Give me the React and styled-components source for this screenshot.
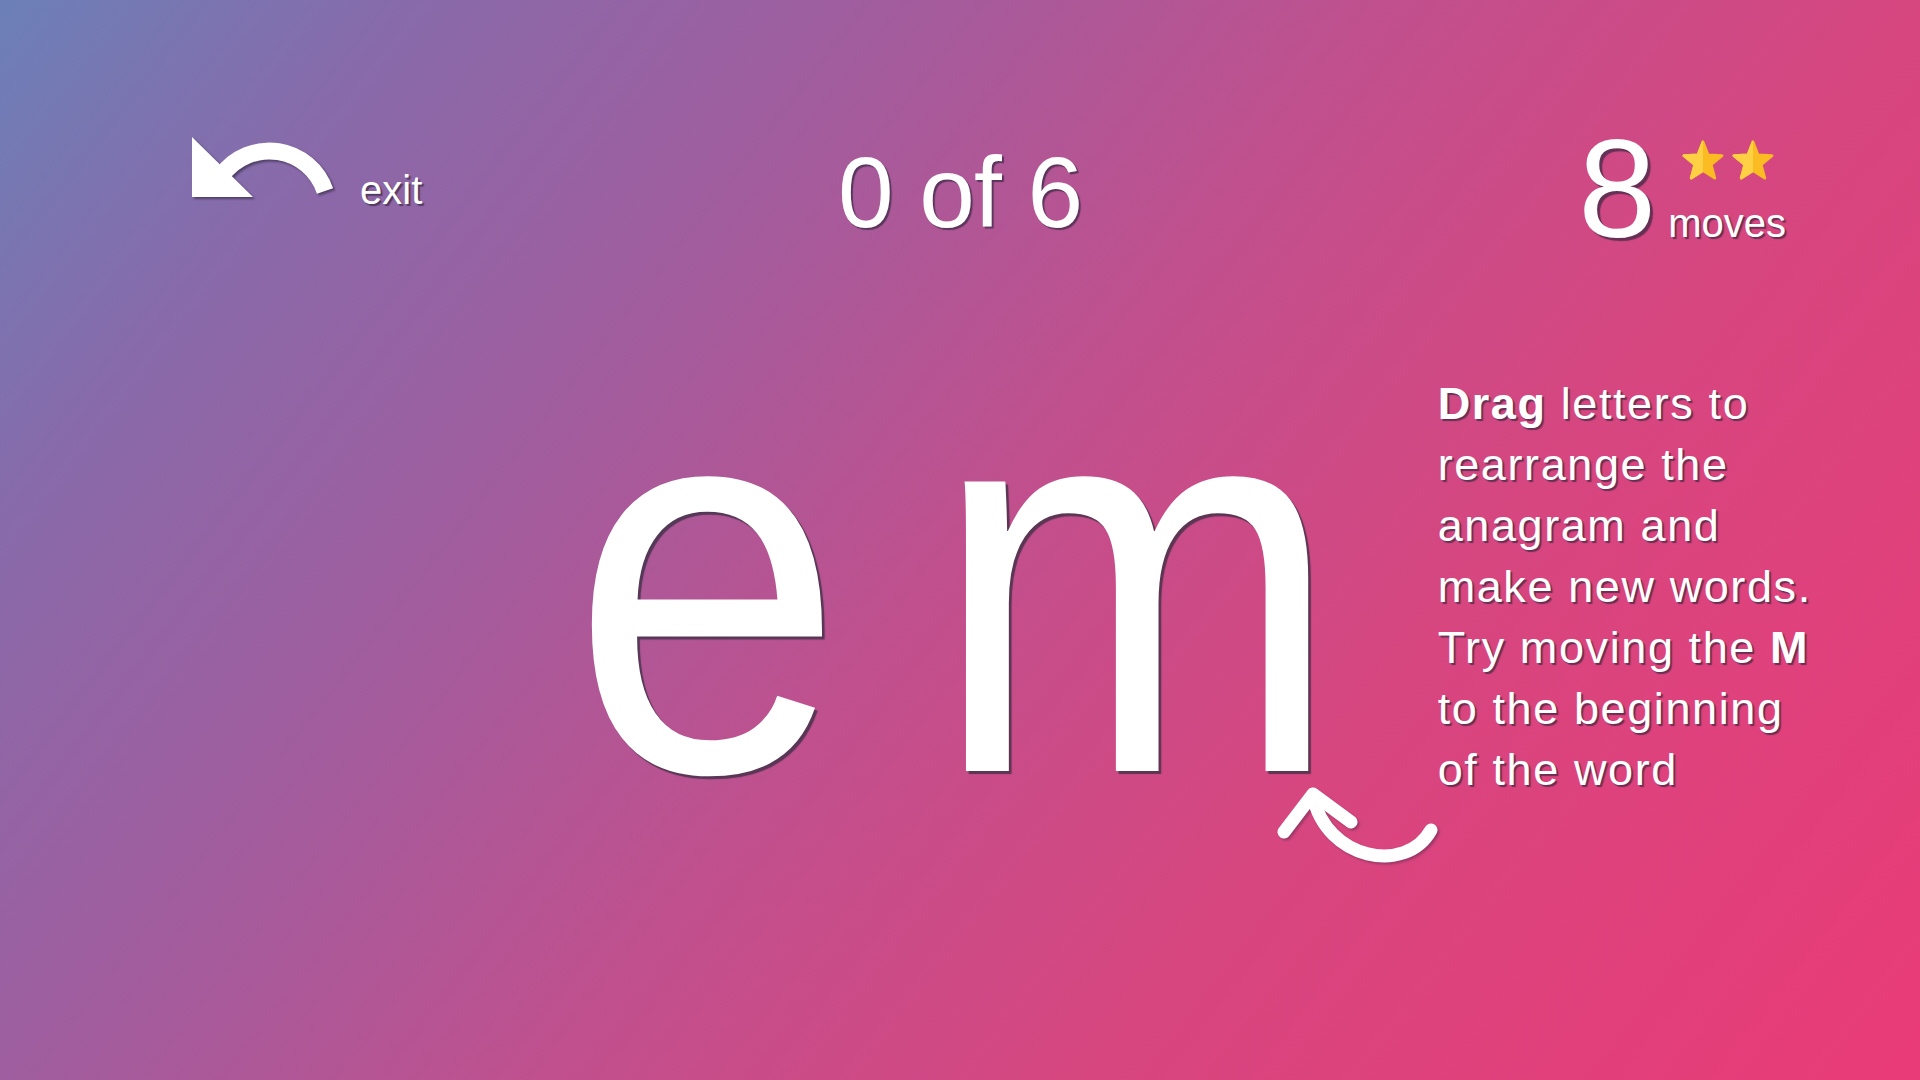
import React from "react"
import styled, { createGlobalStyle } from "styled-components"

const GlobalStyle = createGlobalStyle`
   html, body {
      margin: 0;
      padding: 0;
   }
   body {
      font-family: "Liberation Sans", Arial, sans-serif;
      color: #ffffff;
   }
`

const textShadow = "2px 2px 1px rgba(45, 35, 60, 0.65)"

const ExitArrow = () => (
   <svg width="143" height="65" viewBox="0 0 143 65">
      <polygon points="0,2 0,62 61,62" fill="#fff" />
      <path
         d="M 30 40 A 58.7 58.7 0 0 1 133 56"
         fill="none"
         stroke="#fff"
         strokeWidth="17"
      />
   </svg>
)

const Star = () => (
   <svg width="42" height="40" viewBox="-1 -1 44 42">
      <defs>
         <clipPath id="leftHalf">
            <rect x="-2" y="-2" width="23" height="46" />
         </clipPath>
      </defs>
      <polygon
         points="21,1 26.29,14.72 40.97,15.51 29.56,24.78 33.35,38.99 21,31 8.65,38.99 12.44,24.78 1.03,15.51 15.71,14.72"
         fill="#fbbb22"
         stroke="#fbbb22"
         strokeWidth="3"
         strokeLinejoin="round"
      />
      <polygon
         clipPath="url(#leftHalf)"
         points="21,1 26.29,14.72 40.97,15.51 29.56,24.78 33.35,38.99 21,31 8.65,38.99 12.44,24.78 1.03,15.51 15.71,14.72"
         fill="#ffd043"
         stroke="#ffd043"
         strokeWidth="3"
         strokeLinejoin="round"
      />
   </svg>
)

const HintArrow = () => (
   <svg width="175" height="95" viewBox="0 0 175 95">
      <g
         fill="none"
         stroke="#fff"
         strokeWidth="13"
         strokeLinecap="round"
         strokeLinejoin="round"
      >
         <path d="M 13 52 L 42 14 L 80 42" />
         <path d="M 42 16 C 55 80 135 95 160 50" />
      </g>
   </svg>
)

const App = () => {
   const letters = ["e", "m"]

   return (
      <>
         <GlobalStyle />
         <Page>
            <Header>
               <ExitButton>
                  <IconWrap>
                     <ExitArrow />
                  </IconWrap>
                  <ExitLabel>exit</ExitLabel>
               </ExitButton>
               <Progress>0 of 6</Progress>
               <Score>
                  <MovesCount>8</MovesCount>
                  <ScoreSide>
                     <Stars>
                        <Star />
                        <Star />
                     </Stars>
                     <MovesLabel>moves</MovesLabel>
                  </ScoreSide>
               </Score>
            </Header>
            <Stage>
               <span />
               <LetterRow>
                  {letters.map((l, i) => (
                     <Letter key={i}>{l}</Letter>
                  ))}
               </LetterRow>
               <Hint>
                  <HintText>
                     <b>Drag</b> letters to
                     <br />
                     rearrange the
                     <br />
                     anagram and
                     <br />
                     make new words.
                     <br />
                     Try moving the <b>M</b>
                     <br />
                     to the beginning
                     <br />
                     of the word
                  </HintText>
                  <HintIcon>
                     <HintArrow />
                  </HintIcon>
               </Hint>
            </Stage>
         </Page>
      </>
   )
}

export default App

const Page = styled.div`
   width: 100%;
   height: 100vh;
   overflow: hidden;
   display: flex;
   flex-direction: column;
   background: linear-gradient(
      128deg,
      #6c80b8 0%,
      #886aaa 15%,
      #a15d9e 32%,
      #c0508e 50%,
      #d7467f 70%,
      #e93b77 100%
   );
`

const Header = styled.header`
   display: grid;
   grid-template-columns: 1fr auto 1fr;
   align-items: start;
   padding-top: 119px;
`

const ExitButton = styled.div`
   display: flex;
   align-items: flex-start;
   gap: 25px;
   padding-left: 192px;
   cursor: pointer;
`

const IconWrap = styled.div`
   margin-top: 16px;
   line-height: 0;
   filter: drop-shadow(2px 2px 1px rgba(45, 35, 60, 0.6));
`

const ExitLabel = styled.span`
   margin-top: 51px;
   font-size: 40px;
   line-height: 1;
   text-shadow: ${textShadow};
`

const Progress = styled.div`
   margin-top: 23px;
   font-size: 100px;
   line-height: 1;
   letter-spacing: -1px;
   text-shadow: ${textShadow};
`

const Score = styled.div`
   justify-self: end;
   display: flex;
   align-items: flex-start;
   gap: 12px;
   padding-right: 134px;
`

const MovesCount = styled.span`
   font-size: 140px;
   line-height: 1;
   text-shadow: 3px 3px 1px rgba(45, 35, 60, 0.65);
`

const ScoreSide = styled.div`
   display: flex;
   flex-direction: column;
`

const Stars = styled.div`
   display: flex;
   gap: 8px;
   margin: 21px 0 0 14px;
   line-height: 0;
`

const MovesLabel = styled.span`
   margin-top: 23px;
   font-size: 40px;
   line-height: 1;
   text-shadow: ${textShadow};
`

const Stage = styled.main`
   display: grid;
   grid-template-columns: 1fr auto 1fr;
   align-items: start;
`

const LetterRow = styled.div`
   display: flex;
   gap: 48px;
   padding-top: 48px;
`

const Letter = styled.span`
   display: inline-block;
   font-size: 548px;
   line-height: 1;
   transform: scaleX(0.895);
   cursor: grab;
   user-select: none;
   text-shadow: 3px 3px 1px rgba(55, 45, 65, 0.75);
`

const Hint = styled.div`
   position: relative;
   padding: 114px 0 0 73px;
`

const HintText = styled.p`
   margin: 0;
   font-size: 45px;
   line-height: 61px;
   letter-spacing: 1.6px;
   white-space: nowrap;
   text-shadow: ${textShadow};

   b {
      font-weight: 700;
   }
`

const HintIcon = styled.div`
   position: absolute;
   left: -94px;
   top: 521px;
   line-height: 0;
   filter: drop-shadow(2px 2px 1px rgba(45, 35, 60, 0.35));
`
